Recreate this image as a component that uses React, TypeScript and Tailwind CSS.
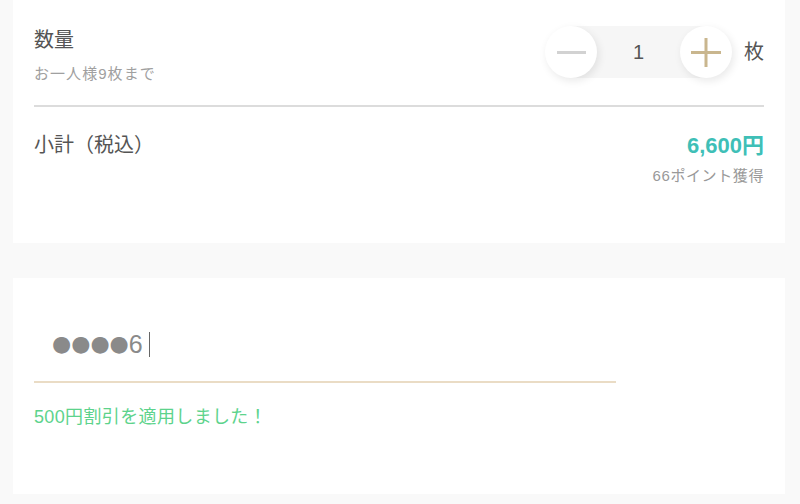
import React from "react";

const JP = "font-['Liberation_Sans','Noto_Sans_CJK_JP',sans-serif]";

function Stepper() {
  return (
    <div className="flex items-center">
      <div className="relative flex items-center">
        {/* track behind the buttons */}
        <div className="absolute inset-y-0 left-[26px] right-[26px] bg-[#f6f6f6]" />
        <button
          type="button"
          className="relative flex size-[52px] items-center justify-center rounded-full bg-white shadow-[2px_3px_8px_rgba(0,0,0,0.09)]"
        >
          <span className="block h-[3px] w-[29px] bg-[#d2d2d2]" />
        </button>
        <span className="relative w-[83px] text-center text-[20px] leading-[27px] text-[#555]">1</span>
        <button
          type="button"
          className="relative flex size-[52px] items-center justify-center rounded-full bg-white shadow-[2px_3px_8px_rgba(0,0,0,0.09)]"
        >
          <svg width="30" height="30" viewBox="0 0 30 30">
            <path d="M0 15.5H30M15 1V30" stroke="#c9b68e" strokeWidth="3" fill="none" />
          </svg>
        </button>
      </div>
      <span className="ml-[12px] text-[20px] leading-[27px] text-[#555]">枚</span>
    </div>
  );
}

export default function App() {
  return (
    <div className={`min-h-[504px] bg-[#f9f9f9] pl-[13px] pr-[15px] ${JP}`}>
      <section className="h-[243px] bg-white px-[21px] pt-[26px]">
        <div className="flex items-start justify-between">
          <div className="pt-[1px]">
            <p className="text-[20px] leading-[27px] text-[#555]">数量</p>
            <p className="mt-[9px] text-[15px] leading-[21px] tracking-[0.07em] text-[#a0a0a0]">
              お一人様9枚まで
            </p>
          </div>
          <Stepper />
        </div>

        <div className="mt-[21px] h-[2px] bg-[#dcdcdc]" />

        <div className="mt-[25px] flex items-start justify-between">
          <p className="text-[20px] leading-[27px] text-[#555]">小計（税込）</p>
          <div className="text-right">
            <p className="text-[22px] font-bold leading-[28px] text-[#3fbfb7]">6,600円</p>
            <p className="mt-[6px] text-[15px] leading-[20px] tracking-[0.04em] text-[#999]">
              66ポイント獲得
            </p>
          </div>
        </div>
      </section>

      <section className="mt-[35px] h-[216px] bg-white px-[21px] pt-[51px]">
        <div className="w-[582px] border-b-2 border-[#eadcc5] pb-[22px] pl-[18px]">
          <div className="flex h-[30px] items-center text-[#8a8a8a]">
            <span className="font-['DejaVu_Sans',sans-serif] text-[22px] leading-none">●●●●</span>
            <span className="font-['Liberation_Sans',sans-serif] text-[25px] leading-none">6</span>
            <span className="ml-[6px] block h-[25px] w-px bg-[#666]" />
          </div>
        </div>
        <p className="mt-[22px] text-[18px] leading-[24px] tracking-[0.02em] text-[#5dd38c]">
          500円割引を適用しました！
        </p>
      </section>
    </div>
  );
}
